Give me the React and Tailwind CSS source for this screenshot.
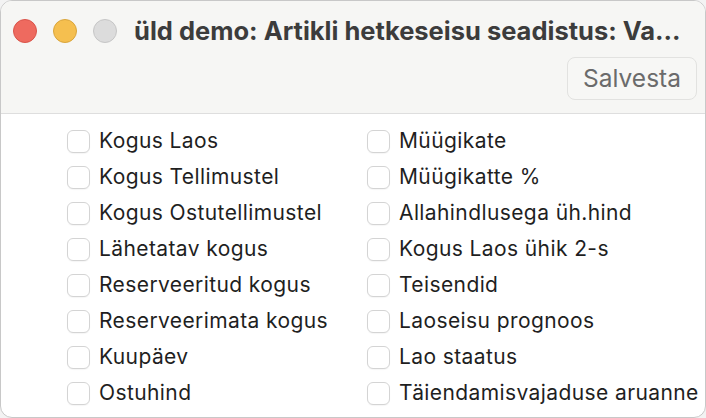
const left = [
  'Kogus Laos',
  'Kogus Tellimustel',
  'Kogus Ostutellimustel',
  'Lähetatav kogus',
  'Reserveeritud kogus',
  'Reserveerimata kogus',
  'Kuupäev',
  'Ostuhind',
];

const right = [
  'Müügikate',
  'Müügikatte %',
  'Allahindlusega üh.hind',
  'Kogus Laos ühik 2-s',
  'Teisendid',
  'Laoseisu prognoos',
  'Lao staatus',
  'Täiendamisvajaduse aruanne',
];

const CheckRow = ({ label }) => (
  <label className="flex items-center h-[36px] whitespace-nowrap">
    <span className="w-[23px] h-[23px] rounded-[6px] border border-[#d4d4d4] bg-white shadow-[0_1px_1px_rgba(0,0,0,0.04)] shrink-0" />
    <span className="ml-[9px] text-[21px] tracking-[0.4px] text-[#1f1f1f]">{label}</span>
  </label>
);

export default function App() {
  return (
    <div className="w-[706px] h-[418px] bg-[#f3f3f3] overflow-hidden" style={{ fontFamily: 'Inter, "Noto Sans", sans-serif' }}>
      <div className="w-[706px] h-[418px] rounded-[12px] border border-[#c8c8c8] bg-white overflow-hidden flex flex-col">
        <div className="h-[113px] shrink-0 bg-[#f6f6f4] border-b border-[#dedede] flex flex-col">
          <div className="flex items-center h-[60px] pl-[12px]">
            <span className="w-[24px] h-[24px] rounded-full bg-[#ee6a5f] border border-[#d9544a]" />
            <span className="w-[24px] h-[24px] rounded-full bg-[#f5bf4f] border border-[#d9a53c] ml-[16px]" />
            <span className="w-[24px] h-[24px] rounded-full bg-[#dcdcdc] border border-[#c6c6c6] ml-[16px]" />
            <span className="ml-[17px] text-[25.5px] font-bold text-[#3c3c3c] whitespace-nowrap">
              üld demo: Artikli hetkeseisu seadistus: Va...
            </span>
          </div>
          <div className="flex justify-end pr-[8px]">
            <button className="h-[43px] w-[130px] -mt-[4px] rounded-[8px] border border-[#e2e2e0] bg-[#f7f7f5] text-[24.5px] text-[#6b6b6b]">
              Salvesta
            </button>
          </div>
        </div>
        <div className="grid grid-cols-[300px_1fr] pt-[9px] pl-[66px]">
          <div className="flex flex-col">
            {left.map((l) => <CheckRow key={l} label={l} />)}
          </div>
          <div className="flex flex-col">
            {right.map((l) => <CheckRow key={l} label={l} />)}
          </div>
        </div>
      </div>
    </div>
  );
}
